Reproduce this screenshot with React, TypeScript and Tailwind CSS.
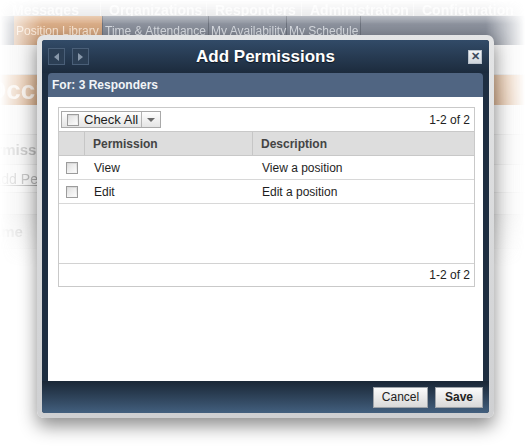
import React from "react";

const topNav = [
  { label: "Messages", w: "w-[97px]" },
  { label: "Organizations", w: "w-[106px]" },
  { label: "Responders", w: "w-[95px]" },
  { label: "Administration", w: "w-[112px]" },
  { label: "Configuration", w: "w-[115px]" },
];

const tabs = [
  { label: "Position Library", w: "w-[89px]", active: true },
  { label: "Time & Attendance", w: "w-[106px]", active: false },
  { label: "My Availability", w: "w-[78px]", active: false },
  { label: "My Schedule", w: "w-[74px]", active: false },
];

const permissions = [
  { name: "View", description: "View a position" },
  { name: "Edit", description: "Edit a position" },
];

function Checkbox() {
  return (
    <span className="block h-[12px] w-[12px] border border-[#9c9c9c] bg-gradient-to-b from-[#d8d8d8] to-[#f6f6f6] p-[1px]">
      <span className="block h-full w-full bg-gradient-to-br from-[#e2e2e2] to-[#fbfbfb]" />
    </span>
  );
}

// page behind the dialog, faded out towards the edges
function BackgroundPage() {
  return (
    <div className="h-full w-full opacity-75 [mask-image:linear-gradient(to_right,transparent_0px,black_42px,black_486px,transparent_525px),linear-gradient(to_bottom,transparent_0px,black_24px,black_215px,transparent_268px)] [mask-composite:intersect]">
      <div className="flex h-[16px] items-end overflow-hidden bg-[#d6d7d9] pl-[4px]">
        {topNav.map((item) => (
          <div
            key={item.label}
            className={`${item.w} -mb-[2px] shrink-0 whitespace-nowrap border-r border-[#ececec] pl-[8px] text-[14px] font-bold leading-[16px] text-[#f7f7f7]`}
          >
            {item.label}
          </div>
        ))}
      </div>
      <div className="flex h-[29px] bg-gradient-to-b from-[#717887] to-[#4d5565] pl-[14px]">
        {tabs.map((tab) => (
          <div
            key={tab.label}
            className={`${tab.w} flex items-end whitespace-nowrap border-r border-[#3c4352] pb-[5px] pl-[2px] text-[12px] ${
              tab.active
                ? "bg-gradient-to-b from-[#d49a68] to-[#b97a47] text-[#f6dcc3]"
                : "text-[#c9ced6]"
            }`}
          >
            {tab.label}
          </div>
        ))}
      </div>
      <div className="h-[30px] border-b border-[#cfcfcf] bg-[#e9e9e9]" />
      <div className="flex h-[30px] items-center bg-gradient-to-b from-[#d39c6c] to-[#c0834f]">
        <div className="w-[38px] overflow-hidden whitespace-nowrap">
          <span className="-ml-[14px] text-[26px] font-bold text-[#f1e4d8]">Occupations</span>
        </div>
      </div>
      <div className="h-[30px] border-b border-[#d2d2d2] bg-[#ececec]" />
      <div className="flex h-[30px] items-center border-b border-[#d2d2d2] bg-[#e6e6e6]">
        <div className="w-[38px] overflow-hidden whitespace-nowrap">
          <span className="-ml-[22px] text-[15px] font-bold text-[#8a8a8a]">Permissions</span>
        </div>
      </div>
      <div className="flex h-[28px] items-center border-b border-[#d2d2d2] bg-[#ececec]">
        <div className="w-[38px] overflow-hidden whitespace-nowrap">
          <span className="-ml-[8px] text-[14px] text-[#7a7a7a] underline">Add Permission</span>
        </div>
      </div>
      <div className="h-[22px] border-b border-[#d2d2d2] bg-[#e6e6e6]" />
      <div className="flex h-[34px] items-center border-b border-[#d2d2d2] bg-[#dcdcdc]">
        <div className="w-[38px] overflow-hidden whitespace-nowrap">
          <span className="-ml-[18px] text-[15px] font-bold text-[#8a8a8a]">Name</span>
        </div>
      </div>
      <div className="h-[40px] bg-[#e6e6e6]" />
    </div>
  );
}

function PermissionGrid() {
  return (
    <div className="flex h-[180px] flex-col border border-[#c9c9c9] text-[12px] text-[#1e1e1e]">
      <div className="flex h-[23px] items-center justify-between pl-[2px] pr-[4px]">
        <div className="flex h-[17px] items-stretch border border-[#a9a9a9] bg-gradient-to-b from-[#ffffff] to-[#e4e4e4]">
          <div className="flex items-center gap-[5px] pl-[5px] pr-[3px]">
            <Checkbox />
            <span className="text-[13px] leading-none">Check All</span>
          </div>
          <div className="flex w-[19px] items-center justify-center border-l border-[#b4b4b4]">
            <span className="h-0 w-0 border-x-[4px] border-t-[4px] border-x-transparent border-t-[#6a6a6a]" />
          </div>
        </div>
        <span className="text-[12px] text-[#222]">1-2 of 2</span>
      </div>
      <div className="flex h-[25px] border-y border-[#c8c8c8] bg-[#dddddd] font-bold text-[#444]">
        <div className="w-[26px] border-r border-[#c6c6c6]" />
        <div className="flex w-[168px] items-center border-r border-[#c6c6c6] pl-[8px]">Permission</div>
        <div className="flex flex-1 items-center pl-[8px]">Description</div>
      </div>
      {permissions.map((p) => (
        <div key={p.name} className="flex h-[24px] items-center border-b border-[#d8d8d8]">
          <div className="flex w-[26px] justify-center">
            <Checkbox />
          </div>
          <div className="w-[168px] pl-[9px]">{p.name}</div>
          <div className="flex-1 pl-[9px]">{p.description}</div>
        </div>
      ))}
      <div className="flex-1" />
      <div className="flex h-[23px] items-center justify-end border-t border-[#d2d2d2] pr-[4px] text-[#222]">
        1-2 of 2
      </div>
    </div>
  );
}

function Dialog() {
  return (
    <div className="absolute left-[37px] top-[35px] h-[383px] w-[457px] rounded-[7px] bg-gradient-to-b from-[#e4e5e6] to-[#cfd0d2] p-[5px] shadow-[0_8px_18px_rgba(0,0,0,0.45)]">
      <div className="flex h-full flex-col overflow-hidden rounded-[3px] bg-[#1e2e41]">
        <div className="flex h-[33px] shrink-0 items-center bg-gradient-to-b from-[#324b68] to-[#1c2b3d] px-[6px]">
          <div className="flex w-[60px] gap-[7px]">
            <div className="flex h-[17px] w-[17px] items-center justify-center border border-[#4a5f78] bg-[#2c3f55]">
              <span className="h-0 w-0 border-y-[4px] border-r-[5px] border-y-transparent border-r-[#8898aa]" />
            </div>
            <div className="flex h-[17px] w-[17px] items-center justify-center border border-[#4a5f78] bg-[#2c3f55]">
              <span className="h-0 w-0 border-y-[4px] border-l-[5px] border-y-transparent border-l-[#8898aa]" />
            </div>
          </div>
          <div className="flex-1 text-center text-[17px] font-bold text-white [text-shadow:0_1px_1px_rgba(0,0,0,0.6)]">
            Add Permissions
          </div>
          <div className="flex w-[60px] justify-end pr-[1px]">
            <div className="flex h-[14px] w-[14px] items-center justify-center border border-[#b9c1cb] bg-gradient-to-b from-[#f1f3f5] to-[#cfd5dc] text-[11px] font-bold leading-none text-[#3b4a5c]">
              ✕
            </div>
          </div>
        </div>
        <div className="mx-[6px] flex h-[24px] shrink-0 items-center rounded-t-[4px] bg-[#506582] pl-[4px] text-[12px] font-bold text-[#f2f5f8]">
          For: 3 Responders
        </div>
        <div className="mx-[6px] flex-1 bg-white pl-[10px] pr-[8px] pt-[10px]">
          <PermissionGrid />
        </div>
        <div className="flex h-[32px] shrink-0 items-center justify-end gap-[7px] bg-gradient-to-b from-[#1a2736] to-[#43607f] pr-[6px]">
          <button className="h-[21px] w-[55px] border border-[#9ea3a9] bg-gradient-to-b from-[#fbfbfb] to-[#d9d9d9] text-[12px] text-[#222]">
            Cancel
          </button>
          <button className="h-[21px] w-[48px] border border-[#9ea3a9] bg-gradient-to-b from-[#fbfbfb] to-[#d9d9d9] text-[12px] font-bold text-[#222]">
            Save
          </button>
        </div>
      </div>
    </div>
  );
}

export default function App() {
  return (
    <div className="relative h-[446px] w-[525px] overflow-hidden bg-white font-['Liberation_Sans',Arial,sans-serif]">
      <BackgroundPage />
      <Dialog />
    </div>
  );
}
